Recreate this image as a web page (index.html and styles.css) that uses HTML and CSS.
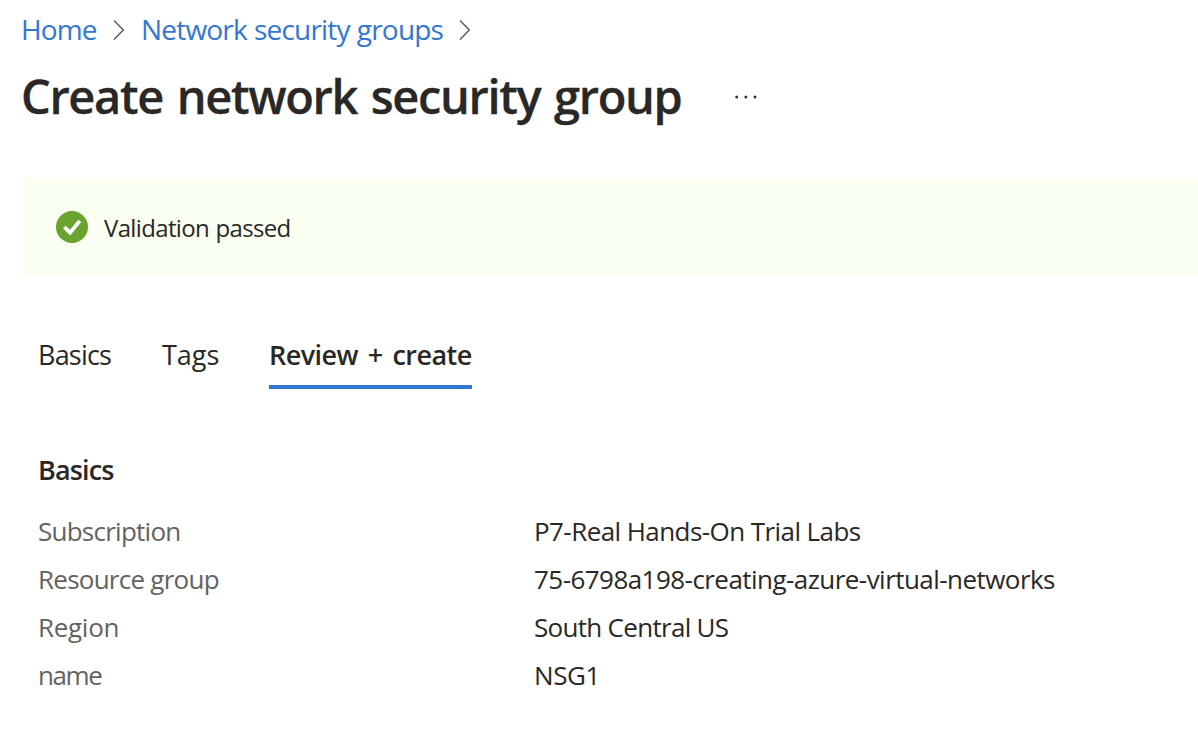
FILE: index.html
```html
<!DOCTYPE html>
<html lang="en">
<head>
<meta charset="utf-8">
<title>Create network security group</title>
<link rel="stylesheet" href="styles.css">
</head>
<body>
<nav class="breadcrumb">
  <a class="crumb crumb-home" href="#">Home</a>
  <svg class="chevron" viewBox="0 0 12 22"><path d="M1 1.5L10.3 11L1 20.5"/></svg>
  <a class="crumb crumb-groups" href="#">Network security groups</a>
  <svg class="chevron" viewBox="0 0 12 22"><path d="M1 1.5L10.3 11L1 20.5"/></svg>
</nav>
<header class="header">
  <h1 class="title">Create network security group</h1>
  <svg class="more" viewBox="0 0 24 6"><circle cx="2.7" cy="3" r="1.5"/><circle cx="11.9" cy="3" r="1.5"/><circle cx="21" cy="3" r="1.5"/></svg>
</header>
<div class="alert">
  <svg class="alert-icon" viewBox="0 0 32 32"><circle cx="16" cy="16" r="16"/><path d="M8.3 16L14.1 21.7L23.8 9.9"/></svg>
  <span class="alert-text">Validation passed</span>
</div>
<div class="tabs">
  <a class="tab tab-basics">Basics</a>
  <a class="tab tab-tags">Tags</a>
  <a class="tab tab-active">Review + create</a>
</div>
<section class="summary">
  <h2 class="summary-title">Basics</h2>
  <dl class="fields">
    <dt class="key">Subscription</dt><dd class="value">P7-Real Hands-On Trial Labs</dd>
    <dt class="key">Resource group</dt><dd class="value value-group">75-6798a198-creating-azure-virtual-networks</dd>
    <dt class="key key-region">Region</dt><dd class="value value-region">South Central US</dd>
    <dt class="key key-name">name</dt><dd class="value value-name">NSG1</dd>
  </dl>
</section>
</body>
</html>
```
FILE: styles.css
```css
* { box-sizing: border-box; }
body {
  margin: 0;
  background: #fff;
  color: #292827;
  font-family: "Open Sans", "Noto Sans", sans-serif;
  white-space: nowrap;
  overflow: hidden;
}
.breadcrumb { display: flex; align-items: center; height: 60px; padding-left: 21px; }
.crumb { color: #3277d2; font-size: 28px; line-height: 58px; padding-bottom: 2px; text-decoration: none; }
.crumb-home { width: 92px; letter-spacing: -0.9px; }
.crumb-groups { width: 318px; margin-left: 16px; letter-spacing: -0.8px; word-spacing: 0.6px; }
.chevron { width: 12px; height: 22px; fill: none; stroke: #605e5c; stroke-width: 1.5; }
.header { display: flex; align-items: center; height: 73px; padding-left: 21px; }
.title { width: 713px; margin: 0; font-size: 47px; line-height: 73px; font-weight: 600; letter-spacing: -1.36px; word-spacing: 3px; -webkit-text-stroke: 0.3px #292827; }
.more { width: 24px; height: 6px; margin-top: 1px; fill: #323130; }
.alert {
  display: flex;
  align-items: center;
  gap: 16px;
  height: 99px;
  margin: 45px 0 0 22px;
  padding-left: 34px;
  background: #f9fff1;
  border-radius: 4px 0 0 4px;
}
.alert-icon { width: 32px; height: 32px; margin-bottom: 1px; fill: #6ba32f; }
.alert-icon path { fill: none; stroke: #fff; stroke-width: 3.8; }
.alert-text { font-size: 24px; letter-spacing: -0.65px; word-spacing: 0.8px; }
.tabs { display: flex; height: 65px; margin-top: 47px; padding-left: 38px; }
.tab { font-size: 27px; line-height: 62px; }
.tab-basics { width: 124px; letter-spacing: -0.8px; }
.tab-tags { width: 107px; }
.tab-active { width: 203px; border-bottom: 4px solid #3277d2; font-weight: 600; letter-spacing: -0.55px; word-spacing: 3.3px; }
.summary { padding: 56px 0 0 38px; }
.summary-title { margin: 0; font-size: 27px; line-height: 50px; font-weight: 600; letter-spacing: -0.85px; }
.fields { display: grid; grid-template-columns: 496px 1fr; grid-auto-rows: 48px; margin: 12px 0 0; font-size: 26px; line-height: 48px; }
.key { color: #646260; letter-spacing: -0.75px; }
.key-region { letter-spacing: -0.3px; }
.key-name { letter-spacing: -1.4px; }
.value { margin: 0; letter-spacing: -0.57px; }
.value-group { letter-spacing: -0.55px; }
.value-region { letter-spacing: -0.7px; }
.value-name { letter-spacing: -0.4px; }
```
